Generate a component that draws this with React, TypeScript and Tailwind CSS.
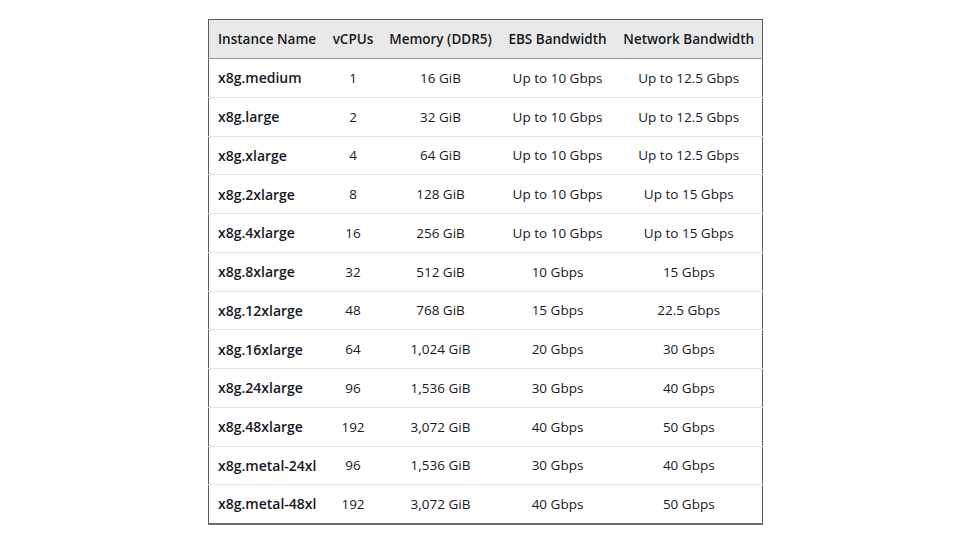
import React from 'react';

const rows = [
  ['x8g.medium', '1', '16 GiB', 'Up to 10 Gbps', 'Up to 12.5 Gbps'],
  ['x8g.large', '2', '32 GiB', 'Up to 10 Gbps', 'Up to 12.5 Gbps'],
  ['x8g.xlarge', '4', '64 GiB', 'Up to 10 Gbps', 'Up to 12.5 Gbps'],
  ['x8g.2xlarge', '8', '128 GiB', 'Up to 10 Gbps', 'Up to 15 Gbps'],
  ['x8g.4xlarge', '16', '256 GiB', 'Up to 10 Gbps', 'Up to 15 Gbps'],
  ['x8g.8xlarge', '32', '512 GiB', '10 Gbps', '15 Gbps'],
  ['x8g.12xlarge', '48', '768 GiB', '15 Gbps', '22.5 Gbps'],
  ['x8g.16xlarge', '64', '1,024 GiB', '20 Gbps', '30 Gbps'],
  ['x8g.24xlarge', '96', '1,536 GiB', '30 Gbps', '40 Gbps'],
  ['x8g.48xlarge', '192', '3,072 GiB', '40 Gbps', '50 Gbps'],
  ['x8g.metal-24xl', '96', '1,536 GiB', '30 Gbps', '40 Gbps'],
  ['x8g.metal-48xl', '192', '3,072 GiB', '40 Gbps', '50 Gbps'],
];

const headers = ['Instance Name', 'vCPUs', 'Memory (DDR5)', 'EBS Bandwidth', 'Network Bandwidth'];

export default function App() {
  return (
    <div className="w-[970px] h-[545px] bg-white pt-[19px] pl-[208px] font-['Open_Sans','Noto_Sans',sans-serif] text-[#16191f]">
      <table className="table-fixed border-collapse w-[554px] border-x border-t border-[#5a5a5a] border-b-2 border-b-[#6b6b6b] text-[14px]">
        <colgroup>
          <col className="w-[116px]" />
          <col className="w-[57px]" />
          <col className="w-[118px]" />
          <col className="w-[116px]" />
          <col className="w-[147px]" />
        </colgroup>
        <thead>
          <tr className="h-[39px] bg-[#e9e9e9] border-b border-[#9a9a9a]">
            {headers.map((h, i) => (
              <th
                key={h}
                className={`font-semibold text-[13.5px] whitespace-nowrap px-0 ${i === 0 ? 'text-left pl-[9px]' : 'text-center'}`}
              >
                {h}
              </th>
            ))}
          </tr>
        </thead>
        <tbody>
          {rows.map((r, ri) => (
            <tr key={r[0]} className={`h-[38.75px] ${ri < rows.length - 1 ? 'border-b border-[#e4e4e4]' : ''}`}>
              {r.map((c, i) => (
                <td
                  key={i}
                  className={`whitespace-nowrap ${i === 0 ? 'text-left pl-[9px] font-semibold' : 'text-center text-[13.5px]'}`}
                >
                  {c}
                </td>
              ))}
            </tr>
          ))}
        </tbody>
      </table>
    </div>
  );
}
